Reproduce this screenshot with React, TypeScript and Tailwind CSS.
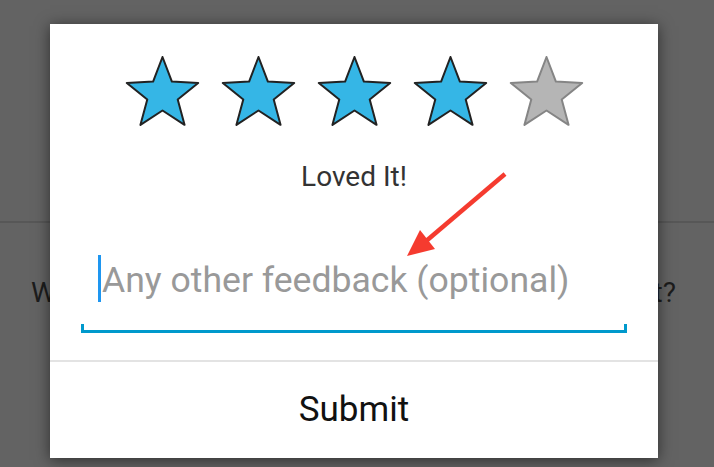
import React from "react";

const STAR_PATH =
  "M37.5 1 L46.9 25.56 L73.17 26.91 L52.72 43.44 L59.54 68.84 L37.5 54.5 L15.46 68.84 L22.28 43.44 L1.83 26.91 L28.1 25.56 Z";

function Star({ filled }: { filled: boolean }) {
  return (
    <svg width="75" height="70" viewBox="0 0 75 70">
      <path
        d={STAR_PATH}
        fill={filled ? "#35b6e6" : "#b5b5b5"}
        stroke={filled ? "#222222" : "#858585"}
        strokeWidth="2"
        strokeLinejoin="round"
      />
    </svg>
  );
}

export default function App() {
  return (
    <div
      className="relative h-[467px] w-[714px] overflow-hidden bg-[#636363]"
      style={{ fontFamily: "Roboto, 'Liberation Sans', sans-serif" }}
    >
      {/* Underlying screen (dimmed) */}
      <div className="h-[223px] border-b-2 border-[#575757]" />
      <div className="mt-[54px] flex justify-between whitespace-nowrap pl-[31px] pr-[38px] text-[28px] leading-[32px] text-[#1c1c1c]">
        <span>What</span>
        <span>of it?</span>
      </div>

      {/* Dialog */}
      <div className="absolute left-[50px] top-[24px] flex h-[434px] w-[608px] flex-col bg-white shadow-[0_2px_14px_rgba(0,0,0,0.55)]">
        <div className="flex justify-center gap-[21px] pt-[32px]">
          <Star filled />
          <Star filled />
          <Star filled />
          <Star filled />
          <Star filled={false} />
        </div>
        <div className="mt-[35px] text-center text-[28px] leading-[32px] text-[#333333]">
          Loved It!
        </div>

        <div className="mx-[31px] mt-[62px]">
          <div className="flex items-start pl-[17px]">
            <div className="h-[47px] w-[3px] bg-[#1e96f0]" />
            <div className="ml-[1px] mt-[4px] text-[35.6px] leading-[42px] text-[#999999]">
              Any other feedback (optional)
            </div>
          </div>
          <div className="mt-[22px] h-[9px] border-x-[3px] border-b-[3px] border-[#0099cc]" />
        </div>

        <div className="mt-[27px] h-[2px] bg-[#e3e3e3]" />
        <div className="flex flex-1 items-center justify-center text-[35px] leading-[42px] text-[#111111]">
          Submit
        </div>
      </div>

      {/* Red annotation arrow */}
      <svg
        className="pointer-events-none absolute left-0 top-0"
        width="714"
        height="467"
        viewBox="0 0 714 467"
      >
        <line x1="505" y1="174" x2="425" y2="242" stroke="#f53b2f" strokeWidth="4.5" />
        <polygon points="407,256 420,230 435,249" fill="#f53b2f" />
      </svg>
    </div>
  );
}
